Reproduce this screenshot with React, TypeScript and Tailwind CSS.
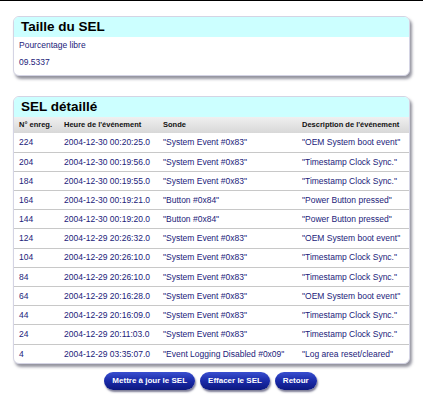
const rows = [
  ["224", "2004-12-30 00:20:25.0", "\"System Event #0x83\"", "\"OEM System boot event\""],
  ["204", "2004-12-30 00:19:56.0", "\"System Event #0x83\"", "\"Timestamp Clock Sync.\""],
  ["184", "2004-12-30 00:19:55.0", "\"System Event #0x83\"", "\"Timestamp Clock Sync.\""],
  ["164", "2004-12-30 00:19:21.0", "\"Button #0x84\"", "\"Power Button pressed\""],
  ["144", "2004-12-30 00:19:20.0", "\"Button #0x84\"", "\"Power Button pressed\""],
  ["124", "2004-12-29 20:26:32.0", "\"System Event #0x83\"", "\"OEM System boot event\""],
  ["104", "2004-12-29 20:26:10.0", "\"System Event #0x83\"", "\"Timestamp Clock Sync.\""],
  ["84", "2004-12-29 20:26:10.0", "\"System Event #0x83\"", "\"Timestamp Clock Sync.\""],
  ["64", "2004-12-29 20:16:28.0", "\"System Event #0x83\"", "\"OEM System boot event\""],
  ["44", "2004-12-29 20:16:09.0", "\"System Event #0x83\"", "\"Timestamp Clock Sync.\""],
  ["24", "2004-12-29 20:11:03.0", "\"System Event #0x83\"", "\"Timestamp Clock Sync.\""],
  ["4", "2004-12-29 03:35:07.0", "\"Event Logging Disabled #0x09\"", "\"Log area reset/cleared\""],
]

function Card({ title, children }: { title: string; children: React.ReactNode }) {
  return (
    <div className="mx-[13px] rounded-[6px] border border-[#d4d4e4] bg-white shadow-[2px_3px_3px_rgba(60,60,80,0.55)] overflow-hidden">
      <div className="h-[20px] bg-[#ccffff] px-[7px] flex items-center text-[13.5px] font-bold text-black leading-none">
        {title}
      </div>
      {children}
    </div>
  )
}

export default function App() {
  return (
    <div className="w-[423px] h-[398px] bg-white border-t border-black font-['Liberation_Sans',Arial,sans-serif] pt-[15px]">
      <Card title="Taille du SEL">
        <div className="px-[5px] pt-[4px] pb-[9px] text-[8.5px] text-[#22227a] leading-none">
          <div>Pourcentage libre</div>
          <div className="mt-[8px]">09.5337</div>
        </div>
      </Card>

      <div className="h-[20px]" />

      <Card title="SEL détaillé">
        <table className="w-full text-[8.5px] leading-none border-collapse">
          <thead>
            <tr className="h-[16px] bg-gradient-to-b from-[#f0f0f0] to-[#d8d8d8] text-[#111] text-[7.5px]">
              <th className="pl-[5px] text-left font-bold w-[50px]">N° enreg.</th>
              <th className="text-left font-bold w-[99px]">Heure de l'événement</th>
              <th className="text-left font-bold w-[139px]">Sonde</th>
              <th className="text-left font-bold">Description de l'événement</th>
            </tr>
          </thead>
          <tbody className="text-[#22227a]">
            {rows.map((r, i) => (
              <tr key={r[0]} className={`h-[19.2px] ${i < rows.length - 1 ? "border-b border-[#c8c8c8]" : ""}`}>
                <td className="pl-[5px]">{r[0]}</td>
                <td>{r[1]}</td>
                <td>{r[2]}</td>
                <td>{r[3]}</td>
              </tr>
            ))}
          </tbody>
        </table>
      </Card>

      <div className="flex justify-center gap-[5px] mt-[8px] pr-[2px]">
        {["Mettre à jour le SEL", "Effacer le SEL", "Retour"].map((b) => (
          <button
            key={b}
            className="h-[18px] px-[8px] rounded-full bg-gradient-to-b from-[#3a4fd0] via-[#1a2aa8] to-[#0c1880] text-white text-[8px] font-bold shadow-[1px_2px_2px_rgba(40,40,80,0.6)] leading-none"
          >
            {b}
          </button>
        ))}
      </div>
    </div>
  )
}
